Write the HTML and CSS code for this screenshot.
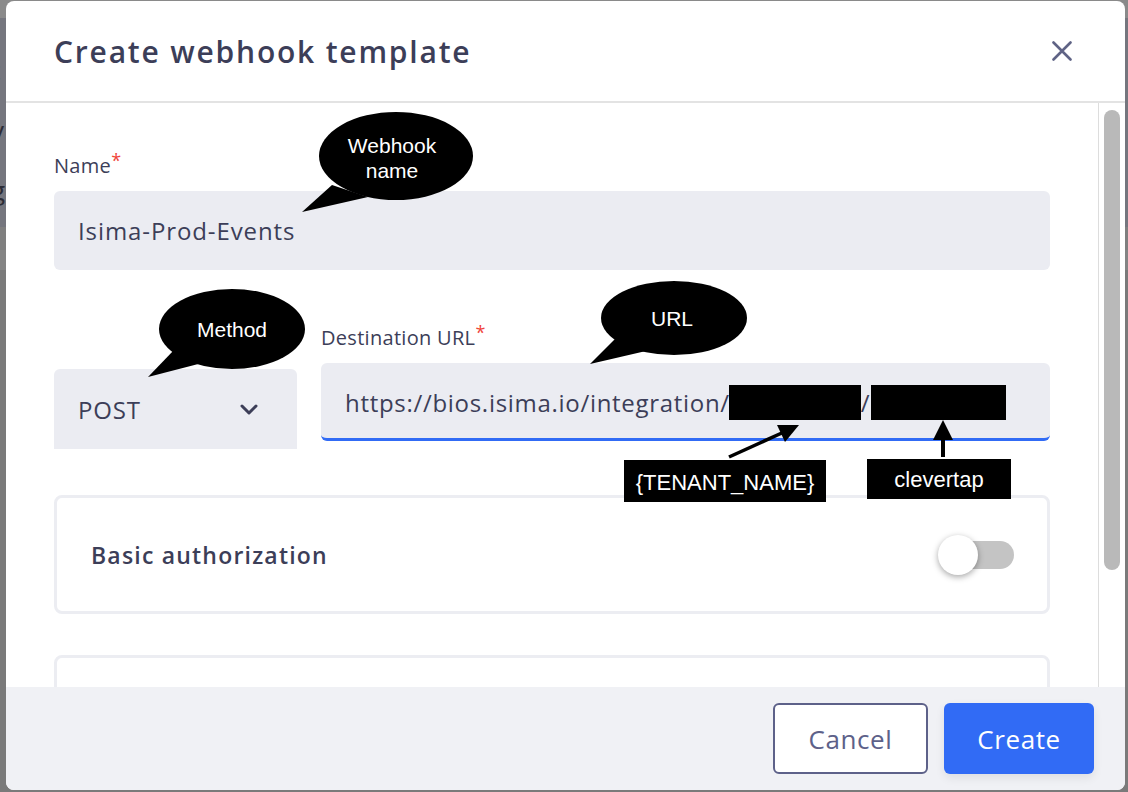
FILE: index.html
```html
<!DOCTYPE html>
<html lang="en">
<head>
<meta charset="utf-8">
<title>Create webhook template</title>
<link rel="stylesheet" href="styles.css">
</head>
<body>
<div class="page">
  <p class="page-line">t</p>
  <p class="page-line">v</p>
  <p class="page-line">g</p>
</div>

<div class="modal">
  <header class="modal-header">
    <h1 class="modal-title">Create webhook template</h1>
    <button class="close-btn" aria-label="Close">
      <svg width="20" height="20" viewBox="0 0 20 20"><path d="M1.5 1.5L18.5 18.5M18.5 1.5L1.5 18.5" stroke="#5f6385" stroke-width="2.6" stroke-linecap="round" fill="none"/></svg>
    </button>
  </header>

  <div class="modal-main">
    <div class="modal-body">
      <div class="content">
        <div class="field">
          <label class="field-label">Name<span class="req">*</span></label>
          <div class="input">Isima-Prod-Events</div>
        </div>

        <div class="row">
          <div class="select">
            <span>POST</span>
            <svg width="18" height="11" viewBox="0 0 18 11"><path d="M2 2L9 9L16 2" stroke="#3c3e58" stroke-width="3" fill="none" stroke-linecap="round" stroke-linejoin="round"/></svg>
          </div>
          <div class="field url-field">
            <label class="field-label">Destination URL<span class="req">*</span></label>
            <div class="input input-focused url-input"><span class="url-text">https://bios.isima.io/integration/</span><span class="redact redact-a"></span><span class="url-text">/</span><span class="redact redact-b"></span></div>
          </div>
        </div>

        <div class="card">
          <span class="card-title">Basic authorization</span>
          <span class="toggle"><span class="track"></span><span class="knob"></span></span>
        </div>

        <div class="card card-next"></div>
      </div>
    </div>
    <div class="scrollbar"><div class="thumb"></div></div>
  </div>

  <footer class="modal-footer">
    <button class="btn btn-outline">Cancel</button>
    <button class="btn btn-primary">Create</button>
  </footer>
</div>

<svg class="annotations" width="1128" height="792" viewBox="0 0 1128 792">
  <g fill="#000">
    <ellipse cx="396" cy="156" rx="77" ry="44"/>
    <polygon points="332,185 302,212 368,197"/>
    <ellipse cx="232" cy="329" rx="73" ry="40"/>
    <polygon points="174,350 148,377 206,362"/>
    <ellipse cx="674" cy="318" rx="73" ry="37"/>
    <polygon points="616,338 590,364 646,351"/>
    <line x1="729" y1="457" x2="784" y2="432" stroke="#000" stroke-width="3.5"/>
    <polygon points="799,425 777,425 785,442"/>
    <line x1="943" y1="457" x2="943" y2="436" stroke="#000" stroke-width="4"/>
    <polygon points="943,420 933,440 953,440"/>
    <rect x="624" y="460" width="202" height="42"/>
    <rect x="867" y="459" width="144" height="40"/>
  </g>
  <g class="note-text" fill="#fff" text-anchor="middle">
    <text x="392" y="153">Webhook</text>
    <text x="392" y="178">name</text>
    <text x="232" y="337">Method</text>
    <text x="672" y="326">URL</text>
  </g>
  <g class="box-text" fill="#fff" text-anchor="middle">
    <text x="725" y="490">{TENANT_NAME}</text>
    <text x="939" y="487">clevertap</text>
  </g>
</svg>
</body>
</html>
```

FILE: styles.css
```css
* {
  box-sizing: border-box;
  margin: 0;
  padding: 0;
}

html, body {
  width: 1128px;
  height: 792px;
  overflow: hidden;
}

body {
  position: relative;
  background: linear-gradient(to bottom, #8a8a8a 0, #8a8a8a 18px, #75767e 18px, #75767e 227px, #7f7f7f 227px, #7f7f7f 250px, #848484 250px, #848484 270px, #7a7a7a 270px);
  font-family: "Open Sans", "Liberation Sans", sans-serif;
  color: #3c3e58;
}

.page {
  padding-top: 54px;
}

.page-line {
  font-size: 26px;
  line-height: 32px;
  margin: 0 0 28px -9px;
  color: #2c2c36;
}

.modal {
  position: absolute;
  left: 6px;
  top: 1px;
  width: 1119px;
  height: 789px;
  background: #fff;
  border-radius: 8px;
  overflow: hidden;
  display: flex;
  flex-direction: column;
}

.modal-header {
  flex: none;
  height: 102px;
  border-bottom: 2px solid #e3e3e3;
  display: flex;
  align-items: center;
  justify-content: space-between;
  padding: 0 53px 0 48px;
}

.modal-title {
  font-size: 30px;
  font-weight: 600;
  color: #3c3e58;
  letter-spacing: 1.8px;
}

.close-btn {
  width: 20px;
  height: 20px;
  border: 0;
  background: none;
  display: flex;
}

.modal-main {
  flex: 1;
  display: flex;
  min-height: 0;
}

.modal-body {
  flex: 1;
  overflow: hidden;
  padding: 51px 0 0 48px;
}

.content {
  width: 996px;
}

.scrollbar {
  flex: none;
  width: 27px;
  border-left: 1px solid #dddddd;
  padding: 7px 5px 0 5px;
}

.thumb {
  height: 460px;
  background: #b9b9b9;
  border-radius: 8px;
}

.field-label {
  display: block;
  font-size: 20px;
  line-height: 24px;
  margin-bottom: 13px;
  color: #3c3e58;
  letter-spacing: 0.3px;
}

.req {
  color: #f0443a;
  font-size: 18px;
  vertical-align: 6px;
  line-height: 0;
}

.input {
  height: 79px;
  background: #ebecf2;
  border-radius: 6px;
  padding: 0 24px;
  display: flex;
  align-items: center;
  font-size: 24px;
  letter-spacing: 0.9px;
  color: #3c3e58;
  white-space: nowrap;
}

.row {
  margin-top: 56px;
  display: flex;
  align-items: flex-start;
  gap: 24px;
}

.select {
  flex: none;
  margin-top: 43px;
  width: 243px;
  height: 80px;
  background: #ebecf2;
  border-radius: 6px 6px 0 0;
  padding: 0 39px 0 24px;
  display: flex;
  align-items: center;
  justify-content: space-between;
  font-size: 24px;
  letter-spacing: 0.8px;
}

.url-field {
  flex: 1;
}

.input-focused {
  height: 78px;
  border-bottom: 3px solid #316bf5;
  padding-top: 3px;
}

.url-input {
  letter-spacing: 0.7px;
}

.redact {
  display: inline-block;
  height: 35px;
  background: #000;
}

.redact-a {
  width: 132px;
  margin-left: -1px;
}

.redact-b {
  width: 135px;
  margin-left: 1px;
}

.card {
  margin-top: 46px;
  height: 119px;
  border: 3px solid #ecedf2;
  border-radius: 8px;
  display: flex;
  align-items: center;
  justify-content: space-between;
  padding: 0 33px 0 34px;
}

.card-title {
  font-size: 23px;
  font-weight: 600;
  letter-spacing: 1.2px;
  color: #3c3e58;
}

.toggle {
  position: relative;
  width: 76px;
  height: 40px;
  display: flex;
  align-items: center;
  justify-content: flex-end;
}

.track {
  width: 64px;
  height: 28px;
  border-radius: 14px;
  background: #c4c4c4;
}

.knob {
  position: absolute;
  left: 0;
  top: 0;
  width: 40px;
  height: 40px;
  border-radius: 50%;
  background: #fff;
  box-shadow: 0 2px 6px rgba(0, 0, 0, 0.35);
}

.card-next {
  margin-top: 41px;
  height: 120px;
}

.modal-footer {
  flex: none;
  height: 103px;
  background: #f0f1f5;
  display: flex;
  justify-content: flex-end;
  align-items: center;
  gap: 16px;
  padding-right: 31px;
}

.btn {
  height: 71px;
  border-radius: 6px;
  font-family: inherit;
  font-size: 26px;
  letter-spacing: 0.6px;
}

.btn-outline {
  width: 155px;
  background: #fff;
  border: 2px solid #5d6189;
  color: #5d6189;
}

.btn-primary {
  width: 150px;
  background: #316bf5;
  border: 0;
  color: #fff;
  box-shadow: 0 4px 10px rgba(0, 0, 0, 0.08);
}

.annotations {
  position: absolute;
  left: 0;
  top: 0;
  pointer-events: none;
}

.note-text {
  font-family: "Liberation Sans", Arial, sans-serif;
  font-size: 21px;
}

.box-text {
  font-family: "Liberation Sans", Arial, sans-serif;
  font-size: 22px;
}
```
